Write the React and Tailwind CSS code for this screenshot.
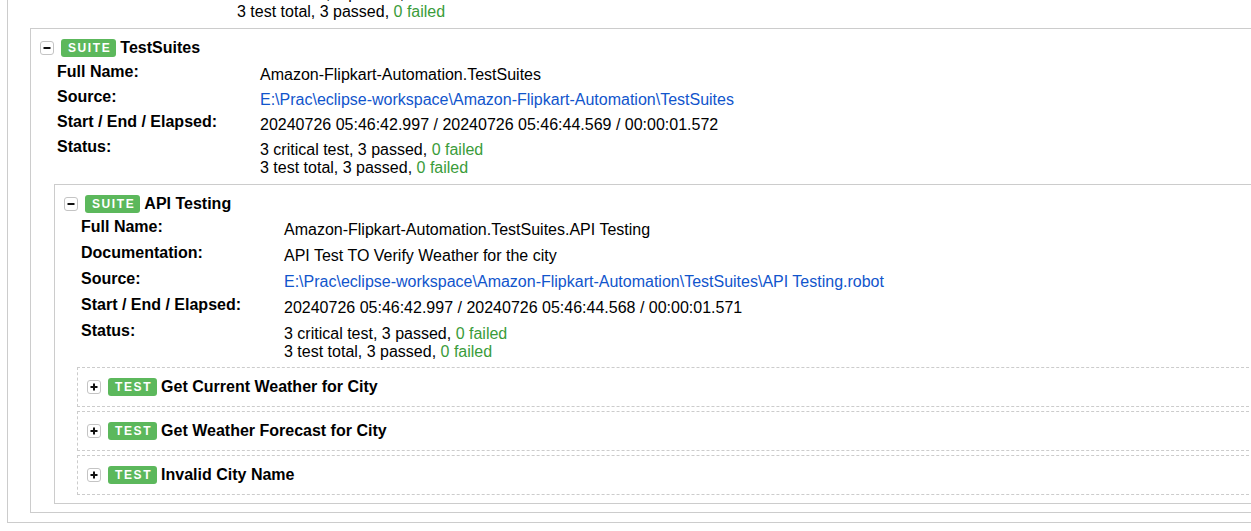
import React from 'react';

function Toggle({ open }) {
  return (
    <svg width="14" height="14" viewBox="0 0 14 14" className="shrink-0">
      <rect x="0.5" y="0.5" width="13" height="13" rx="2.5" fill="#fff" stroke="#c4c4c4" />
      <path d="M3.5 7h7" stroke="#111" strokeWidth="2" />
      {!open && <path d="M7 3.5v7" stroke="#111" strokeWidth="2" />}
    </svg>
  );
}

function Badge({ children }) {
  return (
    <span className="ml-[7px] inline-flex h-[18px] items-center rounded-[3px] bg-[#5cb85c] pl-[7px] pr-[5px] text-[12px] font-bold tracking-[1.6px] text-white">
      {children}
    </span>
  );
}

function Row({ label, children, wide }) {
  return (
    <div className="flex">
      <div className="w-[203px] shrink-0 pt-[1px] font-bold leading-[18px]">{label}</div>
      <div className={wide ? 'pt-[4px] pb-[4px] leading-[18px]' : 'pt-[4px] pb-[3px] leading-[18px]'}>{children}</div>
    </div>
  );
}

function Status({ critical, total }) {
  return (
    <>
      <div>
        {critical} critical test, {critical} passed, <span className="text-[#3a9c3a]">0 failed</span>
      </div>
      <div>
        {total} test total, {total} passed, <span className="text-[#3a9c3a]">0 failed</span>
      </div>
    </>
  );
}

function Header({ open, label, title }) {
  return (
    <div className="flex h-[18px] items-center pl-[9px]">
      <Toggle open={open} />
      <Badge>{label}</Badge>
      <span className="ml-[4px] font-bold leading-[18px]">{title}</span>
    </div>
  );
}

const tests = ['Get Current Weather for City', 'Get Weather Forecast for City', 'Invalid City Name'];

export default function App() {
  return (
    <div className="h-[531px] w-[1251px] overflow-hidden bg-white text-[16px] text-black font-['Liberation_Sans',Arial,sans-serif]">
      {/* top-level suite, mostly scrolled out of view */}
      <div className="-mt-[20px] ml-[7px] w-[1300px] border border-[#ccc] pb-[9px]">
        <div className="pl-[26px]">
          <Row label="Status:">
            <Status critical={3} total={3} />
          </Row>
        </div>

        {/* TestSuites */}
        <div className="mt-[4px] ml-[22px] border border-[#ccc] pt-[10px] pb-[8px]">
          <Header open label="SUITE" title="TestSuites" />
          <div className="mt-[5px] pl-[26px]">
            <Row label="Full Name:">Amazon-Flipkart-Automation.TestSuites</Row>
            <Row label="Source:">
              <a className="text-[#15c]">{'E:\\Prac\\eclipse-workspace\\Amazon-Flipkart-Automation\\TestSuites'}</a>
            </Row>
            <Row label="Start / End / Elapsed:">20240726 05:46:42.997 / 20240726 05:46:44.569 / 00:00:01.572</Row>
            <Row label="Status:">
              <Status critical={3} total={3} />
            </Row>
          </div>

          {/* API Testing */}
          <div className="mt-[4px] ml-[23px] border border-[#ccc] pt-[10px] pb-[8px]">
            <Header open label="SUITE" title="API Testing" />
            <div className="mt-[4px] pl-[26px]">
              <Row wide label="Full Name:">Amazon-Flipkart-Automation.TestSuites.API Testing</Row>
              <Row wide label="Documentation:">API Test TO Verify Weather for the city</Row>
              <Row wide label="Source:">
                <a className="text-[#15c]">
                  {'E:\\Prac\\eclipse-workspace\\Amazon-Flipkart-Automation\\TestSuites\\API Testing.robot'}
                </a>
              </Row>
              <Row wide label="Start / End / Elapsed:">20240726 05:46:42.997 / 20240726 05:46:44.568 / 00:00:01.571</Row>
              <Row label="Status:">
                <Status critical={3} total={3} />
              </Row>
            </div>

            <div className="mt-[3px] ml-[22px] flex flex-col gap-[4px]">
              {tests.map((t) => (
                <div key={t} className="flex h-[40px] items-center border border-dashed border-[#ccc]">
                  <Header label="TEST" title={t} />
                </div>
              ))}
            </div>
          </div>
        </div>
      </div>
    </div>
  );
}
